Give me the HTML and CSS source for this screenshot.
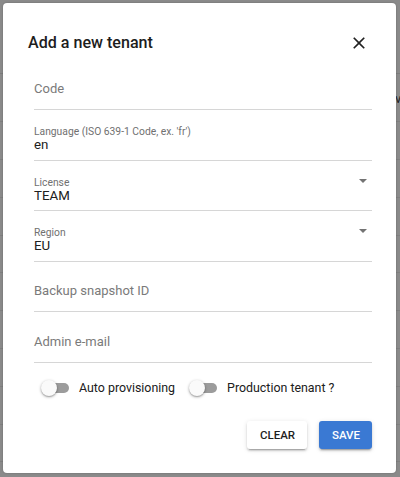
FILE: index.html
```html
<!DOCTYPE html>
<html lang="en">
<head>
<meta charset="utf-8">
<title>Add a new tenant</title>
<link rel="stylesheet" href="styles.css">
</head>
<body>
<div class="backdrop-text">v</div>
<div class="dialog">
  <div class="dialog-header">
    <h2 class="dialog-title">Add a new tenant</h2>
    <button class="close-btn" aria-label="Close">
      <svg viewBox="0 0 24 24" width="20" height="20"><path d="M19 6.41L17.59 5 12 10.59 6.41 5 5 6.41 10.59 12 5 17.59 6.41 19 12 13.41 17.59 19 19 17.59 13.41 12z" fill="#212121"/></svg>
    </button>
  </div>
  <form class="dialog-content">
    <div class="field">
      <div class="field-main">
        <div class="placeholder">Code</div>
      </div>
    </div>
    <div class="field">
      <div class="field-main">
        <div class="label">Language (ISO 639-1 Code, ex. 'fr')</div>
        <div class="value">en</div>
      </div>
    </div>
    <div class="field">
      <div class="field-main">
        <div class="label">License</div>
        <div class="value">TEAM</div>
      </div>
      <span class="arrow"></span>
    </div>
    <div class="field">
      <div class="field-main">
        <div class="label">Region</div>
        <div class="value">EU</div>
      </div>
      <span class="arrow"></span>
    </div>
    <div class="field">
      <div class="field-main">
        <div class="placeholder">Backup snapshot ID</div>
      </div>
    </div>
    <div class="field">
      <div class="field-main">
        <div class="placeholder">Admin e-mail</div>
      </div>
    </div>
    <div class="toggles">
      <label class="toggle-item"><span class="toggle"></span><span class="toggle-label">Auto provisioning</span></label>
      <label class="toggle-item"><span class="toggle"></span><span class="toggle-label">Production tenant ?</span></label>
    </div>
  </form>
  <div class="dialog-actions">
    <button class="btn btn-clear" type="button">CLEAR</button>
    <button class="btn btn-save" type="button">SAVE</button>
  </div>
</div>
</body>
</html>
```
FILE: styles.css
```css
html, body {
  margin: 0;
  padding: 0;
}
body {
  width: 400px;
  height: 477px;
  overflow: hidden;
  position: relative;
  font-family: Roboto, "Liberation Sans", sans-serif;
  background-color: #8a8a8a;
  background-image:
    linear-gradient(#7c7c7c, #7c7c7c),
    linear-gradient(#7f7f7f, #7f7f7f),
    repeating-linear-gradient(to bottom, #7f7f7f 0, #7f7f7f 1px, transparent 1px, transparent 37.8px);
  background-size: 100% 1px, 100% 1px, 100% 340px;
  background-position: 0 73px, 0 121px, 0 159px;
  background-repeat: no-repeat;
  padding: 3px 0 0 3px;
  box-sizing: border-box;
}
.backdrop-text {
  position: absolute;
  left: 395px;
  top: 91px;
  font-size: 13px;
  color: #222;
}
.dialog {
  position: relative;
  width: 393px;
  height: 470px;
  background: #fff;
  border-radius: 4px;
  box-shadow: 0 0 2px rgba(0,0,0,0.25);
  box-sizing: border-box;
  padding: 27px 24px 24px 0;
  display: flex;
  flex-direction: column;
}
.dialog-header {
  display: flex;
  align-items: center;
  justify-content: space-between;
  height: 24px;
  padding-left: 25px;
  padding-right: 3px;
  margin-top: 1px;
}
.dialog-title {
  margin: 0;
  font-size: 16.1px;
  font-weight: 500;
  line-height: 24px;
  color: #1d1d1d;
}
.close-btn {
  border: 0;
  background: none;
  padding: 0;
  width: 20px;
  height: 20px;
  display: flex;
}
.dialog-content {
  margin: 4.4px 0 0 0;
  padding-left: 31px;
  display: flex;
  flex-direction: column;
}
.field {
  height: 50.6px;
  box-sizing: border-box;
  border-bottom: 1px solid #d6d6d6;
  display: flex;
  align-items: flex-end;
  padding-bottom: 6.5px;
}
.field-main {
  flex: 1;
  display: flex;
  flex-direction: column;
}
.label {
  font-size: 10.3px;
  line-height: 12px;
  color: #707070;
  margin-bottom: -1px;
}
.value {
  font-size: 13.3px;
  line-height: 16px;
  color: #202020;
}
.placeholder {
  font-size: 13px;
  line-height: 16px;
  color: #7a7a7a;
  margin-bottom: 5.5px;
}
.arrow {
  width: 0;
  height: 0;
  border-left: 4.5px solid transparent;
  border-right: 4.5px solid transparent;
  border-top: 4.5px solid #737373;
  align-self: center;
  margin: 0 5px 3px 0;
}
.toggles {
  display: flex;
  align-items: center;
  gap: 14px;
  height: 24px;
  margin-top: 13px;
  padding-left: 7px;
}
.toggle-item {
  display: flex;
  align-items: center;
  gap: 10px;
}
.toggle {
  position: relative;
  width: 28px;
  height: 16px;
  display: block;
}
.toggle::before {
  content: "";
  position: absolute;
  left: 2px;
  top: 3px;
  width: 26px;
  height: 10px;
  border-radius: 5px;
  background: #9c9c9c;
}
.toggle::after {
  content: "";
  position: absolute;
  left: 0;
  top: 0;
  width: 16px;
  height: 16px;
  border-radius: 50%;
  background: #fafafa;
  box-shadow: 0 1px 3px rgba(0,0,0,0.35), 0 1px 1px rgba(0,0,0,0.14);
}
.toggle-label {
  font-size: 12.4px;
  line-height: 16px;
  color: #202020;
}
.dialog-actions {
  margin-top: auto;
  display: flex;
  justify-content: flex-end;
  gap: 12px;
}
.btn {
  height: 28px;
  padding: 0 13px;
  border: 0;
  border-radius: 3px;
  font-family: Roboto, "Liberation Sans", sans-serif;
  font-size: 11.5px;
  font-weight: 500;
  box-shadow: 0 3px 1px -2px rgba(0,0,0,0.2), 0 2px 2px 0 rgba(0,0,0,0.14), 0 1px 5px 0 rgba(0,0,0,0.12);
}
.btn-clear {
  background: #fff;
  color: #1e1e1e;
  width: 60px;
}
.btn-save {
  background: #3a79d3;
  color: #fff;
  width: 53px;
}
```
